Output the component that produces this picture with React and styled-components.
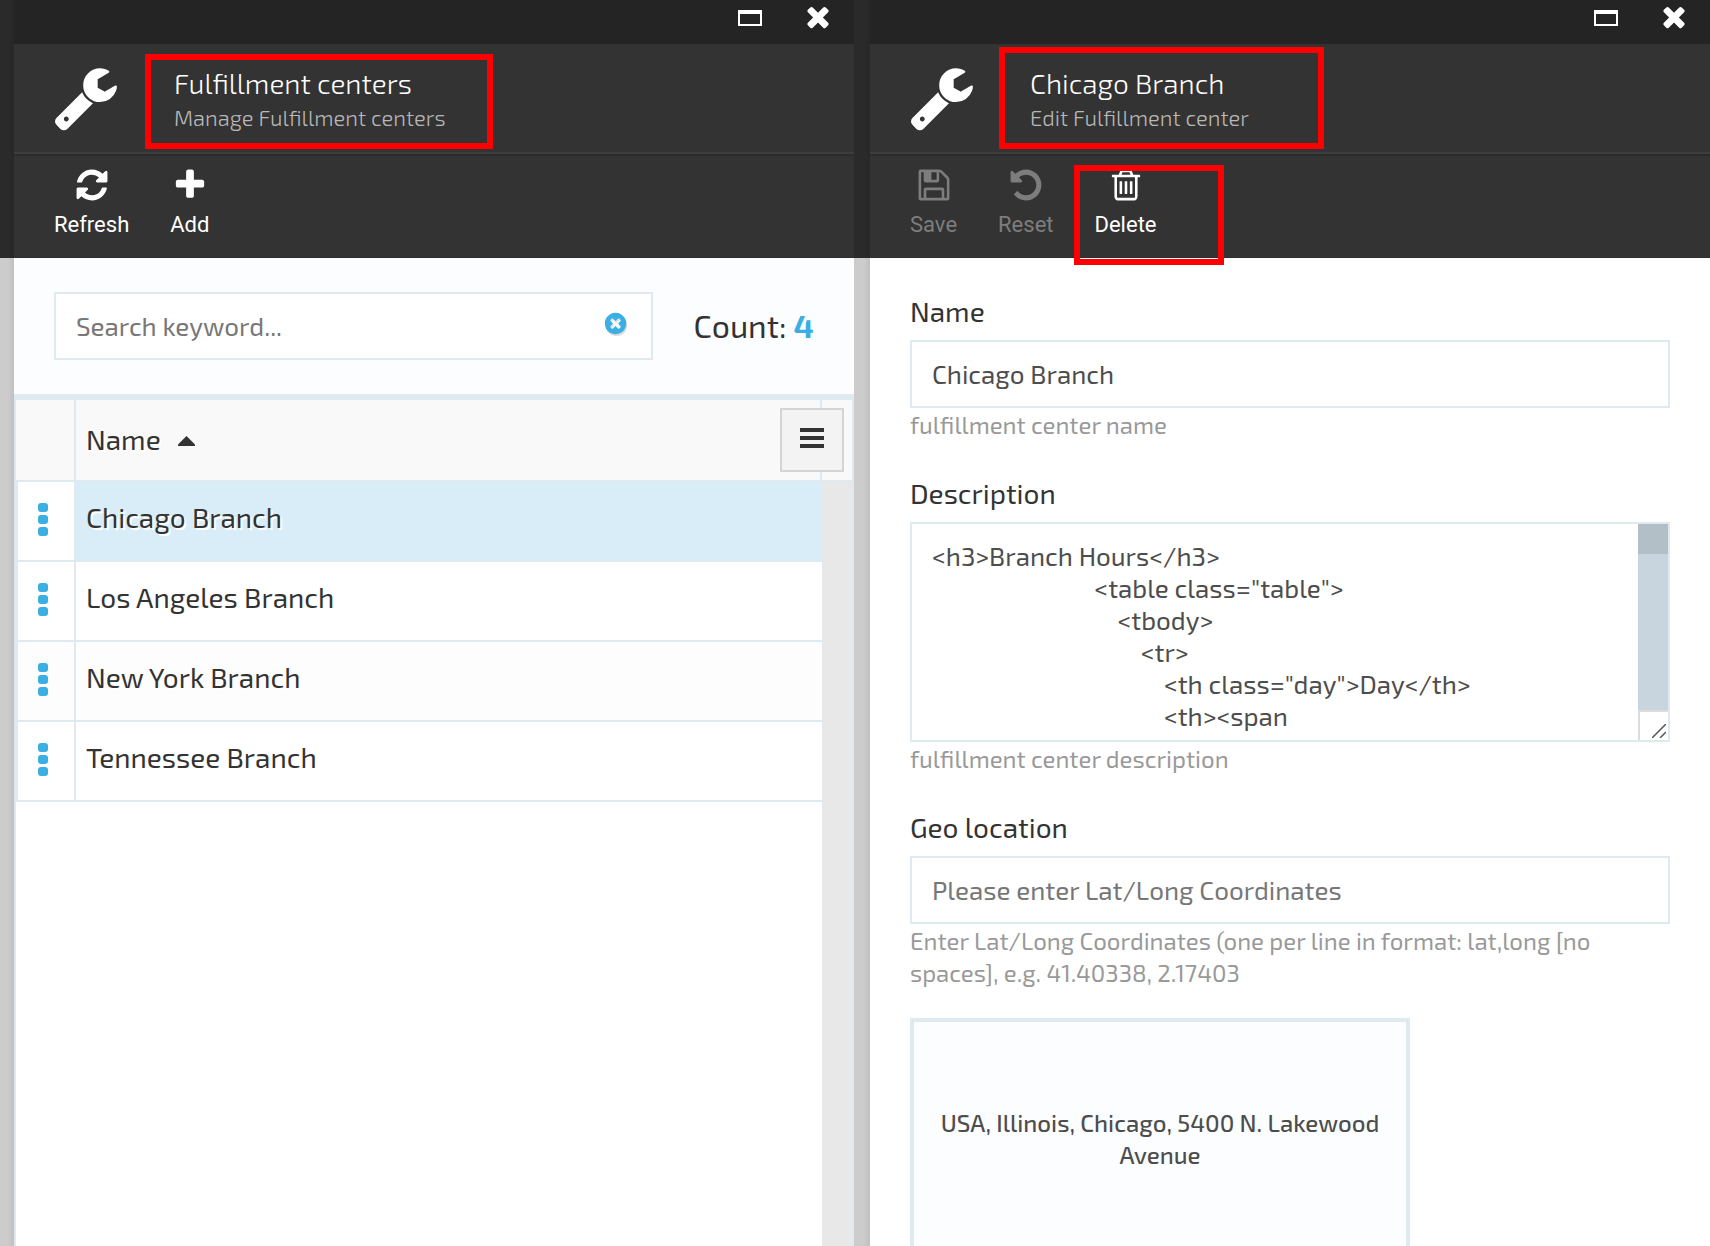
import React from "react";
import styled, { createGlobalStyle } from "styled-components";

const uiFont = '"Exo 2", Roboto, "Noto Sans", sans-serif';
const toolbarFont = 'Roboto, "Liberation Sans", sans-serif';
const line = "#dfe9f0";
const accent = "#3bafe3";

const GlobalStyle = createGlobalStyle`
  *, *::before, *::after { box-sizing: border-box; }
  html, body { height: 100%; }
  body { margin: 0; overflow: hidden; background: #fff; color: #333; font-family: ${uiFont}; }
  #root { height: 100%; }
  button, input, textarea { font: inherit; color: inherit; }
`;

/* ---------- icons ---------- */

const glyphs = {
  refresh:
    "M1639 1056q0 5-1 7-64 268-268 434.5t-478 166.5q-146 0-282.5-55t-243.5-157l-129 129q-19 19-45 19t-45-19-19-45v-448q0-26 19-45t45-19h448q26 0 45 19t19 45-19 45l-137 137q71 66 161 102t187 36q134 0 250-65t186-179q11-17 53-117 8-23 30-23h192q13 0 22.5 9.5t9.5 22.5zm25-800v448q0 26-19 45t-45 19h-448q-26 0-45-19t-19-45 19-45l138-138q-148-137-349-137-134 0-250 65t-186 179q-11 17-53 117-8 23-30 23h-199q-13 0-22.5-9.5t-9.5-22.5v-7q65-268 270-434.5t480-166.5q146 0 284 55.5t245 156.5l130-129q19-19 45-19t45 19 19 45z",
  add: "M1600 736v192q0 40-28 68t-68 28h-416v416q0 40-28 68t-68 28h-192q-40 0-68-28t-28-68v-416h-416q-40 0-68-28t-28-68v-192q0-40 28-68t68-28h416v-416q0-40 28-68t68-28h192q40 0 68 28t28 68v416h416q40 0 68 28t28 68z",
  save: "M512 1536h768v-384h-768v384zm896 0h128v-896q0-14-10-38.5t-20-34.5l-281-281q-10-10-34-20t-39-10v416q0 40-28 68t-68 28h-576q-40 0-68-28t-28-68v-416h-128v1280h128v-416q0-40 28-68t68-28h832q40 0 68 28t28 68v416zm-384-928v-320q0-13-9.5-22.5t-22.5-9.5h-192q-13 0-22.5 9.5t-9.5 22.5v320q0 13 9.5 22.5t22.5 9.5h192q13 0 22.5-9.5t9.5-22.5zm640 32v928q0 40-28 68t-68 28h-1344q-40 0-68-28t-28-68v-1344q0-40 28-68t68-28h928q40 0 88 20t76 48l280 280q28 28 48 76t20 88z",
  reset:
    "M1664 896q0 156-61 298t-164 245-245 164-298 61q-172 0-327-72.5t-264-204.5q-7-10-6.5-22.5t8.5-20.5l137-138q10-9 25-9 16 2 23 12 73 95 179 147t225 52q104 0 198.5-40.5t163.5-109.5 109.5-163.5 40.5-198.5-40.5-198.5-109.5-163.5-163.5-109.5-198.5-40.5q-98 0-188 35.5t-160 101.5l137 138q31 30 14 69-17 40-59 40h-448q-26 0-45-19t-19-45v-448q0-42 40-59 39-17 69 14l130 129q107-101 244.5-156.5t284.5-55.5q156 0 298 61t245 164 164 245 61 298z",
  trash:
    "M704 736v576q0 14-9 23t-23 9h-64q-14 0-23-9t-9-23v-576q0-14 9-23t23-9h64q14 0 23 9t9 23zm256 0v576q0 14-9 23t-23 9h-64q-14 0-23-9t-9-23v-576q0-14 9-23t23-9h64q14 0 23 9t9 23zm256 0v576q0 14-9 23t-23 9h-64q-14 0-23-9t-9-23v-576q0-14 9-23t23-9h64q14 0 23 9t9 23zm128 724v-948h-896v948q0 22 7 40.5t14.5 27 10.5 8.5h832q3 0 10.5-8.5t14.5-27 7-40.5zm-672-1076h448l-48-117q-7-9-17-11h-317q-10 2-17 11zm928 32v64q0 14-9 23t-23 9h-96v948q0 83-47 143.5t-113 60.5h-832q-66 0-113-58.5t-47-141.5v-952h-96q-14 0-23-9t-9-23v-64q0-14 9-23t23-9h309l70-167q15-37 54-63t79-26h320q40 0 79 26t54 63l70 167h309q14 0 23 9t9 23z",
  close:
    "M1490 1322q0 40-28 68l-136 136q-28 28-68 28t-68-28l-294-294-294 294q-28 28-68 28t-68-28l-136-136q-28-28-28-68t28-68l294-294-294-294q-28-28-28-68t28-68l136-136q28-28 68-28t68 28l294 294 294-294q28-28 68-28t68 28l136 136q28 28 28 68t-28 68l-294 294 294 294q28 28 28 68z",
  clear:
    "M1277 1122q0-26-19-45l-181-181 181-181q19-19 19-45 0-27-19-46l-90-90q-19-19-46-19-26 0-45 19l-181 181-181-181q-19-19-45-19-27 0-46 19l-90 90q-19 19-19 46 0 26 19 45l181 181-181 181q-19 19-19 45 0 27 19 46l90 90q19 19 46 19 26 0 45-19l181-181 181 181q19 19 45 19 27 0 46-19l90-90q19-19 19-46zm387-226q0 209-103 385.5t-279.5 279.5-385.5 103-385.5-103-279.5-279.5-103-385.5 103-385.5 279.5-279.5 385.5-103 385.5 103 279.5 279.5 103 385.5z",
  wrench:
    "M448 1472q0-26-19-45t-45-19-45 19-19 45 19 45 45 19 45-19 19-45zm644-420l-682 682q-37 37-90 37-52 0-91-37l-106-108q-38-36-38-90 0-53 38-91l681-681q39 98 114.5 173.5t173.5 114.5zm634-435q0 39-23 106-47 134-164.5 217.5t-258.5 83.5q-185 0-316.5-131.5t-131.5-316.5 131.5-316.5 316.5-131.5q58 0 121.5 16.5t107.5 46.5q16 11 16 28t-16 28l-293 169v224l193 107q5-3 79-48.5t135.5-81 70.5-35.5q15 0 23.5 10t8.5 25z",
};

const Svg = styled.svg`
  display: block;
  flex: none;
  fill: currentColor;
`;

function Icon({ name, size, viewBox = "0 0 1792 1792" }) {
  return (
    <Svg width={size} height={size} viewBox={viewBox} aria-hidden="true">
      <path d={glyphs[name]} />
    </Svg>
  );
}

/* ---------- blade shell ---------- */

const Workspace = styled.main`
  display: flex;
  height: 100%;
  overflow: hidden;
`;

const Gutter = styled.div`
  flex: none;
  width: ${(p) => p.$width}px;
  background:
    linear-gradient(to left, rgba(0, 0, 0, 0.06), transparent 6px),
    linear-gradient(#2a2a2a 258px, #cccccc 258px);
`;

const Blade = styled.section`
  position: relative;
  flex: 1 1 0;
  min-width: 0;
  display: flex;
  flex-direction: column;
  background: #fff;
`;

const WindowBar = styled.div`
  flex: none;
  display: flex;
  justify-content: flex-end;
  gap: 40px;
  height: 44px;
  padding: 2px 20px 0 0;
  background: #242424;
`;

const WindowButton = styled.button`
  display: flex;
  align-items: center;
  height: 32px;
  padding: 0;
  border: 0;
  background: none;
  color: #fff;
`;

const BladeHead = styled.header`
  flex: none;
  display: flex;
  align-items: center;
  gap: 56px;
  height: 108px;
  padding: 2px 40px 0;
  background: #333;
  color: #fff;
`;

const BladeTitle = styled.h1`
  margin: 0;
  font-size: 28px;
  line-height: 36px;
  font-weight: 300;
`;

const BladeSubtitle = styled.p`
  margin: 0;
  font-size: 22px;
  line-height: 32px;
  font-weight: 300;
  color: #b8b8b8;
`;

const Toolbar = styled.div`
  flex: none;
  display: flex;
  align-items: flex-start;
  gap: 41px;
  height: 106px;
  padding: 11px 40px 0;
  border-top: 2px solid #3d3d3d;
  border-bottom: 1px solid #2f2c31;
  background: #333;
  box-shadow: inset 0 2px 0 #2b2b2b;
`;

const Tool = styled.button`
  display: flex;
  flex-direction: column;
  align-items: center;
  gap: 8px;
  padding: 2px 0 0;
  border: 0;
  background: none;
  color: #fff;
  font-family: ${toolbarFont};
  font-size: 22px;
  line-height: 28px;

  &:disabled {
    color: #7d7d7d;
  }
`;

const Callout = styled.div`
  position: absolute;
  left: ${(p) => p.$left}px;
  top: ${(p) => p.$top}px;
  width: ${(p) => p.$width}px;
  height: ${(p) => p.$height}px;
  border: 6px solid #f00;
  pointer-events: none;
`;

function BladeTop({ title, subtitle, tools }) {
  return (
    <>
      <WindowBar>
        <WindowButton aria-label="Maximize">
          <Svg width="24" height="16" viewBox="0 0 24 16" aria-hidden="true">
            <path fillRule="evenodd" d="M0 0h24v16H0zM2 4v10h20V4z" />
          </Svg>
        </WindowButton>
        <WindowButton aria-label="Close">
          <Icon name="close" size={32} viewBox="0 90 1792 1792" />
        </WindowButton>
      </WindowBar>
      <BladeHead>
        <Icon name="wrench" size={64} viewBox="58 93 1697 1697" />
        <div>
          <BladeTitle>{title}</BladeTitle>
          <BladeSubtitle>{subtitle}</BladeSubtitle>
        </div>
      </BladeHead>
      <Toolbar>
        {tools.map((tool) => (
          <Tool key={tool.label} disabled={tool.disabled}>
            <Icon name={tool.icon} size={36} />
            {tool.label}
          </Tool>
        ))}
      </Toolbar>
    </>
  );
}

/* ---------- list blade ---------- */

const SearchBar = styled.div`
  flex: none;
  display: flex;
  align-items: center;
  gap: 40px;
  padding: 34px 40px;
  border-bottom: 6px solid ${line};
  background: #fcfdff;
`;

const SearchBox = styled.div`
  flex: 1;
  display: flex;
  align-items: center;
  height: 68px;
  padding: 0 23px 0 20px;
  border: 2px solid ${line};
  background: #fff;
`;

const SearchInput = styled.input`
  flex: 1;
  min-width: 0;
  padding: 0;
  border: 0;
  outline: 0;
  background: none;
  font-size: 26px;
  line-height: 32px;

  &::placeholder {
    color: #777;
    opacity: 1;
  }
`;

const ClearButton = styled.button`
  display: flex;
  padding: 0 0 6px;
  border: 0;
  background: none;
  color: ${accent};
  filter: drop-shadow(1px 2px 0 #dcdcdc);
`;

const Count = styled.div`
  padding-bottom: 2px;
  font-size: 32px;
  line-height: 36px;
  color: #333;

  strong {
    color: ${accent};
    font-weight: 700;
  }
`;

const Grid = styled.div`
  position: relative;
  flex: 1;
  display: flex;
  align-items: stretch;
  border: solid ${line};
  border-width: 0 2px;
`;

const GridMain = styled.div`
  flex: 1;
`;

const Table = styled.table`
  width: 100%;
  border-collapse: separate;
  border-spacing: 0;
  table-layout: fixed;
  font-size: 28px;
  line-height: 36px;
  text-shadow: 2px 2px 0 #fff;
`;

const HeadCell = styled.th`
  width: ${(p) => (p.$narrow ? "60px" : "auto")};
  height: 82px;
  padding: 0 10px 2px;
  border: solid ${line};
  border-width: 0 2px 2px 0;
  background: #f9f9f9;
  font-weight: 400;
  text-align: left;
`;

const SortLabel = styled.span`
  display: flex;
  align-items: center;
  gap: 17px;
`;

const SortMark = styled(Svg)`
  margin-top: 4px;
`;

const Row = styled.tr`
  background: ${(p) => (p.$alt ? "#fdfdfd" : "#fff")};
`;

const MenuCell = styled.td`
  height: 80px;
  padding: 0 0 4px 20px;
  border: solid ${line};
  border-width: 0 2px 2px 2px;
`;

const NameCell = styled.td`
  height: 80px;
  padding: 0 10px 8px;
  border-bottom: 2px solid ${line};
  background: ${(p) => (p.$selected ? "#d8edf8" : "transparent")};
`;

const RowMenu = styled.button`
  display: flex;
  flex-direction: column;
  gap: 3px;
  padding: 0;
  border: 0;
  background: none;
`;

const Dot = styled.span`
  width: 10px;
  height: 9px;
  border-radius: 3px;
  background: ${accent};
`;

const Rail = styled.div`
  flex: none;
  width: 30px;
  background: #e8e8e8;
`;

const RailHead = styled.div`
  height: 82px;
  border-bottom: 2px solid ${line};
  background: #f9f9f9;
`;

const GridMenu = styled.button`
  position: absolute;
  top: 8px;
  right: 8px;
  display: grid;
  place-items: center;
  width: 64px;
  height: 64px;
  padding: 0 0 4px;
  border: 2px solid #d4d4d4;
  background: #f3f3f3;
  color: #333;
`;

const centers = ["Chicago Branch", "Los Angeles Branch", "New York Branch", "Tennessee Branch"];

function CenterList() {
  return (
    <Blade>
      <BladeTop
        title="Fulfillment centers"
        subtitle="Manage Fulfillment centers"
        tools={[
          { icon: "refresh", label: "Refresh" },
          { icon: "add", label: "Add" },
        ]}
      />
      <SearchBar>
        <SearchBox>
          <SearchInput type="text" aria-label="Search keyword" placeholder="Search keyword..." />
          <ClearButton aria-label="Clear search">
            <Icon name="clear" size={25} />
          </ClearButton>
        </SearchBox>
        <Count>
          Count: <strong>{centers.length}</strong>
        </Count>
      </SearchBar>
      <Grid>
        <GridMain>
          <Table>
            <thead>
              <tr>
                <HeadCell $narrow aria-label="Actions" />
                <HeadCell aria-sort="ascending">
                  <SortLabel>
                    Name
                    <SortMark width="17" height="10" viewBox="0 0 17 10" aria-hidden="true">
                      <path d="M8.500 0L17 8.500V10H0V8.500z" />
                    </SortMark>
                  </SortLabel>
                </HeadCell>
              </tr>
            </thead>
            <tbody>
              {centers.map((name, i) => (
                <Row key={name} $alt={i % 2 === 0 && i > 0}>
                  <MenuCell>
                    <RowMenu aria-label={`Actions for ${name}`}>
                      <Dot />
                      <Dot />
                      <Dot />
                    </RowMenu>
                  </MenuCell>
                  <NameCell $selected={i === 0}>{name}</NameCell>
                </Row>
              ))}
            </tbody>
          </Table>
        </GridMain>
        <Rail>
          <RailHead />
        </Rail>
        <GridMenu aria-label="Grid menu">
          <Svg width="24" height="20" viewBox="0 0 24 20" aria-hidden="true">
            <path d="M0 0h24v4H0zM0 8h24v4H0zM0 16h24v4H0z" />
          </Svg>
        </GridMenu>
      </Grid>
      <Callout $left={131} $top={54} $width={348} $height={95} />
    </Blade>
  );
}

/* ---------- edit blade ---------- */

const Form = styled.form`
  display: flex;
  flex-direction: column;
  gap: 34px;
  padding: 36px 40px 0;
`;

const Field = styled.div`
  display: flex;
  flex-direction: column;
`;

const Label = styled.label`
  margin-bottom: 12px;
  font-size: 28px;
  line-height: 34px;
`;

const TextInput = styled.input`
  width: 100%;
  height: 68px;
  padding: 0 20px 2px;
  border: 2px solid ${line};
  border-radius: 0;
  outline: 0;
  background: #fff;
  color: #4d4d4d;
  font-size: 26px;
  line-height: 32px;

  &::placeholder {
    color: #777;
    opacity: 1;
  }
`;

const Hint = styled.p`
  margin: 1px 0;
  color: #999;
  font-size: 24px;
  line-height: 32px;
`;

const TextAreaFrame = styled.div`
  display: flex;
  height: 220px;
  border: 2px solid ${line};
`;

const TextArea = styled.textarea`
  flex: 1;
  min-width: 0;
  padding: 16px 20px;
  border: 0;
  outline: 0;
  overflow: hidden;
  resize: none;
  background: #fff;
  color: #4d4d4d;
  font-size: 26px;
  line-height: 32px;
`;

const ScrollColumn = styled.div`
  flex: none;
  display: flex;
  flex-direction: column;
  width: 30px;
`;

const ScrollTrack = styled.div`
  flex: 1;
  background: #c9d5de;
`;

const ScrollThumb = styled.div`
  height: 30px;
  background: #b3bfc6;
`;

const ResizeCorner = styled.div`
  display: flex;
  align-items: flex-end;
  justify-content: flex-end;
  height: 30px;
  padding: 2px;
  border: solid #dcdcdc;
  border-width: 2px 0 0 2px;
  color: #555;
`;

const MapBox = styled.div`
  display: flex;
  align-items: center;
  justify-content: center;
  width: 500px;
  max-width: 100%;
  height: 242px;
  margin-top: 28px;
  padding: 0 24px;
  border: 4px solid ${line};
  background: #fcfdff;
  color: #4d4d4d;
  font-size: 24px;
  line-height: 32px;
  font-weight: 500;
  text-align: center;
`;

const indent = (n) => " ".repeat(n);

const description = [
  "<h3>Branch Hours</h3>",
  indent(28) + '<table class="table">',
  indent(32) + "<tbody>",
  indent(36) + "<tr>",
  indent(40) + '<th class="day">Day</th>',
  indent(40) + "<th><span",
  'class="hours">Hours</span></th>',
  indent(36) + "</tr>",
].join("\n");

function CenterForm() {
  return (
    <Blade>
      <BladeTop
        title="Chicago Branch"
        subtitle="Edit Fulfillment center"
        tools={[
          { icon: "save", label: "Save", disabled: true },
          { icon: "reset", label: "Reset", disabled: true },
          { icon: "trash", label: "Delete" },
        ]}
      />
      <Form>
        <Field>
          <Label htmlFor="center-name">Name</Label>
          <TextInput id="center-name" type="text" defaultValue="Chicago Branch" />
          <Hint>fulfillment center name</Hint>
        </Field>
        <Field>
          <Label htmlFor="center-description">Description</Label>
          <TextAreaFrame>
            <TextArea id="center-description" defaultValue={description} spellCheck={false} />
            <ScrollColumn>
              <ScrollTrack>
                <ScrollThumb />
              </ScrollTrack>
              <ResizeCorner>
                <Svg width="14" height="14" viewBox="0 0 14 14" aria-hidden="true">
                  <path d="M0 14L14 0M8 14L14 8" stroke="currentColor" strokeWidth="1.5" />
                </Svg>
              </ResizeCorner>
            </ScrollColumn>
          </TextAreaFrame>
          <Hint>fulfillment center description</Hint>
        </Field>
        <Field>
          <Label htmlFor="center-geo">Geo location</Label>
          <TextInput id="center-geo" type="text" placeholder="Please enter Lat/Long Coordinates" />
          <Hint>
            Enter Lat/Long Coordinates (one per line in format: lat,long [no spaces], e.g. 41.40338,
            2.17403
          </Hint>
          <MapBox>USA, Illinois, Chicago, 5400 N. Lakewood Avenue</MapBox>
        </Field>
      </Form>
      <Callout $left={129} $top={47} $width={325} $height={102} />
      <Callout $left={204} $top={165} $width={150} $height={100} />
    </Blade>
  );
}

export default function App() {
  return (
    <>
      <GlobalStyle />
      <Workspace>
        <Gutter $width={14} />
        <CenterList />
        <Gutter $width={16} />
        <CenterForm />
      </Workspace>
    </>
  );
}
